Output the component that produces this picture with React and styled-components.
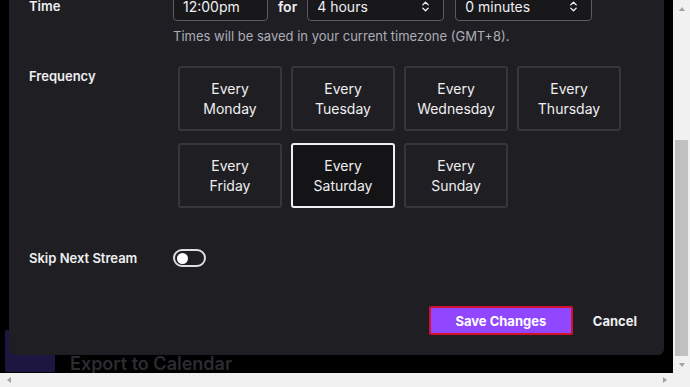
import React from "react"
import styled, { createGlobalStyle } from "styled-components"
import { ChevronsUpDown } from "lucide-react"

const GlobalStyle = createGlobalStyle`
  html, body {
    margin: 0;
    padding: 0;
    background: #000;
    overflow: hidden;
  }
  body {
    font-family: Inter, "Noto Sans", "Liberation Sans", sans-serif;
  }
`

const Screen = styled.div`
  width: 690px;
  height: 387px;
  display: flex;
  flex-direction: column;
  background: #000;
`

const TopRow = styled.div`
  flex: 1;
  display: flex;
  min-height: 0;
`

const Viewport = styled.div`
  position: relative;
  flex: 1;
  overflow: hidden;
  background: #000;
  display: flex;
  flex-direction: column;
`

const PageBehind = styled.div`
  margin-top: auto;
  height: 45px;
  display: flex;
  align-items: flex-start;
  gap: 15px;
  padding-left: 5px;
  overflow: hidden;
`

const PurpleTile = styled.div`
  width: 50px;
  height: 42px;
  margin-top: 2px;
  background: #1d1640;
  border-radius: 2px;
`

const BehindText = styled.div`
  margin-top: 25px;
  font-size: 18px;
  line-height: 22px;
  font-weight: 600;
  color: #2c2c30;
  white-space: nowrap;
`

const Modal = styled.div`
  position: absolute;
  left: 9px;
  top: -29px;
  width: 655px;
  box-sizing: border-box;
  padding: 20px 27px 20px 20px;
  background: #1f1f23;
  border-radius: 0 0 6px 6px;
  color: #efeff1;
`

const FormRow = styled.div`
  display: grid;
  grid-template-columns: 144px 1fr;
  align-items: ${(p) => p.$align || "start"};
  margin-top: ${(p) => p.$gap || 0}px;
`

const Label = styled.div`
  font-size: 13px;
  font-weight: 600;
  line-height: 16px;
  padding-top: ${(p) => p.$pt || 0}px;
`

const TimeLine = styled.div`
  display: flex;
  align-items: center;
`

const Field = styled.div`
  height: 30px;
  width: ${(p) => p.$w}px;
  box-sizing: border-box;
  border: 1px solid #5a5a62;
  border-radius: 4px;
  background: #18181b;
  display: flex;
  align-items: center;
  justify-content: space-between;
  padding: 0 11px 0 9px;
  font-size: 14px;
  color: #efeff1;
`

const ForText = styled.span`
  font-size: 14px;
  font-weight: 600;
  margin: 0 10px;
`

const Hint = styled.div`
  margin-top: 7px;
  font-size: 13px;
  line-height: 16px;
  color: #adadb8;
`

const DayGrid = styled.div`
  margin-left: 5px;
  display: grid;
  grid-template-columns: repeat(4, 104px);
  grid-auto-rows: 65px;
  column-gap: 9px;
  row-gap: 12px;
`

const DayButton = styled.button`
  box-sizing: border-box;
  border: 2px solid ${(p) => (p.$active ? "#efeff1" : "#36363b")};
  border-radius: 3px;
  background: ${(p) => (p.$active ? "#141417" : "#1f1f23")};
  color: #efeff1;
  font-family: inherit;
  font-size: 14px;
  line-height: 20px;
  text-align: center;
  padding: 0;
  display: flex;
  flex-direction: column;
  align-items: center;
  justify-content: center;
`

const Toggle = styled.div`
  width: 33px;
  height: 18px;
  box-sizing: border-box;
  border: 2px solid #dedee3;
  border-radius: 9px;
  display: flex;
  align-items: center;
  padding-left: 2px;
  &::after {
    content: "";
    width: 11px;
    height: 11px;
    border-radius: 50%;
    background: #fff;
  }
`

const Footer = styled.div`
  margin-top: 39px;
  display: flex;
  justify-content: flex-end;
  align-items: center;
  gap: 20px;
`

const SaveButton = styled.button`
  width: 144px;
  height: 29px;
  box-sizing: border-box;
  border: 2px solid #d4102c;
  border-radius: 2px;
  background: #9147ff;
  color: #fff;
  font-family: inherit;
  font-size: 13px;
  font-weight: 700;
`

const CancelButton = styled.button`
  border: none;
  background: none;
  padding: 0;
  color: #efeff1;
  font-family: inherit;
  font-size: 13px;
  font-weight: 700;
`

const VScroll = styled.div`
  width: 17px;
  background: #f1f1f1;
  display: flex;
  flex-direction: column;
`

const HScrollRow = styled.div`
  height: 14px;
  display: flex;
`

const HScroll = styled.div`
  flex: 1;
  background: #f1f1f1;
  display: flex;
  align-items: center;
`

const Corner = styled.div`
  width: 17px;
  background: #f1f1f1;
`

const ArrowBox = styled.div`
  width: ${(p) => p.$w}px;
  height: ${(p) => p.$h}px;
  display: flex;
  align-items: center;
  justify-content: center;
  flex-shrink: 0;
`

const Track = styled.div`
  flex: 1;
  display: flex;
  flex-direction: ${(p) => (p.$vertical ? "column" : "row")};
`

const Thumb = styled.div`
  background: #c1c1c1;
  ${(p) =>
    p.$vertical
      ? `margin: 123px 2px 0; flex: 1;`
      : `height: 100%; width: 618px;`}
`

const Arrow = ({ dir }) => {
  const pts = {
    up: "1,5 4,1 7,5",
    down: "1,1 4,5 7,1",
    left: "5,1 1,4 5,7",
    right: "1,1 5,4 1,7",
  }[dir]
  const vertical = dir === "up" || dir === "down"
  return (
    <svg width={vertical ? 8 : 6} height={vertical ? 6 : 8}>
      <polygon points={pts} fill="#a3a3a3" />
    </svg>
  )
}

const days = [
  "Monday",
  "Tuesday",
  "Wednesday",
  "Thursday",
  "Friday",
  "Saturday",
  "Sunday",
]

const App = () => {
  return (
    <Screen>
      <GlobalStyle />
      <TopRow>
        <Viewport>
          <PageBehind>
            <PurpleTile />
            <BehindText>Export to Calendar</BehindText>
          </PageBehind>
          <Modal>
            <FormRow $align="center">
              <Label>Time</Label>
              <TimeLine>
                <Field $w={95}>12:00pm</Field>
                <ForText>for</ForText>
                <Field $w={137}>
                  4 hours
                  <ChevronsUpDown size={13} strokeWidth={2.6} />
                </Field>
                <Field $w={137} style={{ marginLeft: 11 }}>
                  0 minutes
                  <ChevronsUpDown size={13} strokeWidth={2.6} />
                </Field>
              </TimeLine>
            </FormRow>
            <FormRow>
              <div />
              <Hint>Times will be saved in your current timezone (GMT+8).</Hint>
            </FormRow>
            <FormRow $gap={22}>
              <Label $pt={2}>Frequency</Label>
              <DayGrid>
                {days.map((d) => (
                  <DayButton key={d} $active={d === "Saturday"}>
                    <span>Every</span>
                    <span>{d}</span>
                  </DayButton>
                ))}
              </DayGrid>
            </FormRow>
            <FormRow $gap={41} $align="center">
              <Label>Skip Next Stream</Label>
              <Toggle />
            </FormRow>
            <Footer>
              <SaveButton>Save Changes</SaveButton>
              <CancelButton>Cancel</CancelButton>
            </Footer>
          </Modal>
        </Viewport>
        <VScroll>
          <ArrowBox $w={17} $h={17}>
            <Arrow dir="up" />
          </ArrowBox>
          <Track $vertical>
            <Thumb $vertical />
          </Track>
          <ArrowBox $w={17} $h={17}>
            <Arrow dir="down" />
          </ArrowBox>
        </VScroll>
      </TopRow>
      <HScrollRow>
        <HScroll>
          <ArrowBox $w={17} $h={14}>
            <Arrow dir="left" />
          </ArrowBox>
          <Track>
            <Thumb />
          </Track>
          <ArrowBox $w={17} $h={14}>
            <Arrow dir="right" />
          </ArrowBox>
        </HScroll>
        <Corner />
      </HScrollRow>
    </Screen>
  )
}

export default App
